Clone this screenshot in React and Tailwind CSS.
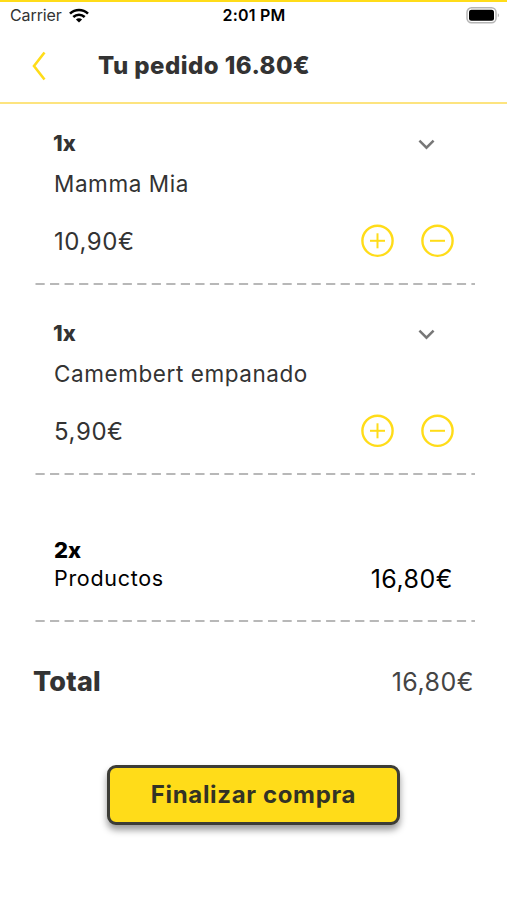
import React from 'react'

const items = [
  { id: 1, qty: 1, name: 'Mamma Mia', price: '10,90€' },
  { id: 2, qty: 1, name: 'Camembert empanado', price: '5,90€' },
]

function StatusBar() {
  return (
    <div className="grid h-[26px] grid-cols-3 items-center pr-[7px] pl-[10px] text-black">
      <div className="flex items-center gap-[7px]">
        <span className="text-[16px] leading-none tracking-[-0.1px] text-[#333]">Carrier</span>
        <svg width="20" height="15" viewBox="0 0 20 15" fill="none" stroke="#000" strokeWidth="2.6">
          <path d="M1 5.6C6.2.7 13.8.7 19 5.6" />
          <path d="M4.3 9C7.6 6 12.4 6 15.7 9" />
          <path d="M10 14.6 6.9 11.5c1.8-1.6 4.4-1.6 6.2 0z" fill="#000" stroke="none" />
        </svg>
      </div>
      <span className="pr-[2px] text-center text-[16px] leading-none font-semibold tracking-[0.2px]">2:01 PM</span>
      <svg className="justify-self-end" width="34" height="17" viewBox="0 0 34 17" fill="none">
        <rect x="1" y="0.8" width="29" height="15" rx="4.5" stroke="#b5b5b5" strokeWidth="1.5" />
        <rect x="3" y="2.8" width="25" height="11" rx="2.5" fill="#000" />
        <path d="M31.8 6.3c1.6.7 1.6 3.3 0 4z" fill="#b5b5b5" />
      </svg>
    </div>
  )
}

function Header() {
  return (
    <header className="flex h-[76px] items-center border-b-2 border-[#fde47f] pt-[1px] pl-[32px]">
      <svg width="14" height="30" viewBox="0 0 14 30" fill="none" stroke="#ffdc19" strokeWidth="2.6">
        <path d="M12.5 1.5 2 15l10.5 13.5" />
      </svg>
      <h1 className="ml-[52px] pt-[1px] text-[24px] leading-none font-extrabold tracking-[0.45px] whitespace-nowrap text-[#333]">
        Tu pedido 16.80€
      </h1>
    </header>
  )
}

function Dashes() {
  return (
    <svg className="block w-[440px] shrink-0" height="2" viewBox="0 0 440 2">
      <path d="M.5 1H440" stroke="#b8b8b8" strokeWidth="2" strokeDasharray="9.2 5.33" />
    </svg>
  )
}

function RoundButton({ label, plus }) {
  return (
    <button type="button" aria-label={label}>
      <svg className="block" width="34" height="34" viewBox="0 0 34 34" fill="none" stroke="#ffdc19" strokeWidth="2">
        <circle cx="17.5" cy="16.8" r="15.1" strokeWidth="2.4" />
        <path d="M10 16.8h15" />
        {plus && <path d="M17.5 9.3v15" />}
      </svg>
    </button>
  )
}

function OrderItem({ item }) {
  return (
    <li className="flex h-[181px] flex-col pl-[35px] text-[#333]">
      <div className="flex h-[78px] w-[400px] items-center justify-between pl-[18px]">
        <span className="text-[22px] leading-none font-extrabold">{item.qty}x</span>
        <svg className="mt-[2px]" width="17" height="11" viewBox="0 0 17 11" fill="none" stroke="#777" strokeWidth="2.5">
          <path d="m1.4 1.7 7.1 7 7.1-7" />
        </svg>
      </div>
      <p className="-mt-[9px] mb-[29px] pl-[19px] text-[22.5px] leading-[22px] tracking-[0.57px]">{item.name}</p>
      <div className="flex h-[34px] w-[419px] items-center justify-between pl-[19px]">
        <span className="pt-[2px] text-[24px] leading-none tracking-[0.6px]">{item.price}</span>
        <div className="flex gap-[26px]">
          <RoundButton label="Añadir" plus />
          <RoundButton label="Quitar" />
        </div>
      </div>
      <div className="mt-auto">
        <Dashes />
      </div>
    </li>
  )
}

export default function App() {
  return (
    <div className="h-[900px] w-[507px] overflow-hidden border-t-2 border-[#ffdc19] bg-white font-['Inter',sans-serif]">
      <StatusBar />
      <Header />
      <main>
        <ul className="flex flex-col gap-[9px]">
          {items.map((item) => (
            <OrderItem key={item.id} item={item} />
          ))}
        </ul>
        <section className="flex h-[147px] flex-col pl-[35px] text-black">
          <p className="mt-[64px] pl-[19px] text-[22px] leading-[22px] font-extrabold">2x</p>
          <div className="mt-[5px] flex h-[26px] w-[418px] items-center justify-between pl-[19px]">
            <span className="text-[21.5px] leading-none tracking-[0.7px]">Productos</span>
            <span className="text-[25px] leading-none tracking-[0.5px]">16,80€</span>
          </div>
          <div className="mt-auto">
            <Dashes />
          </div>
        </section>
        <div className="mt-[44px] flex h-[32px] items-center justify-between pr-[33px] pl-[33px] text-[#333]">
          <span className="pb-[2px] text-[27px] leading-none font-extrabold tracking-[0.2px]">Total</span>
          <span className="text-[25px] leading-none tracking-[0.5px] text-[#444]">16,80€</span>
        </div>
        <button
          type="button"
          className="mx-auto mt-[67px] block h-[60px] w-[293px] rounded-[9px] border-[3px] border-[#3c3c36] bg-[#ffdc19] text-[24px] leading-none font-bold tracking-[0.65px] text-[#333325] shadow-[0_5px_7px_rgba(0,0,0,0.4)]"
        >
          Finalizar compra
        </button>
      </main>
    </div>
  )
}
